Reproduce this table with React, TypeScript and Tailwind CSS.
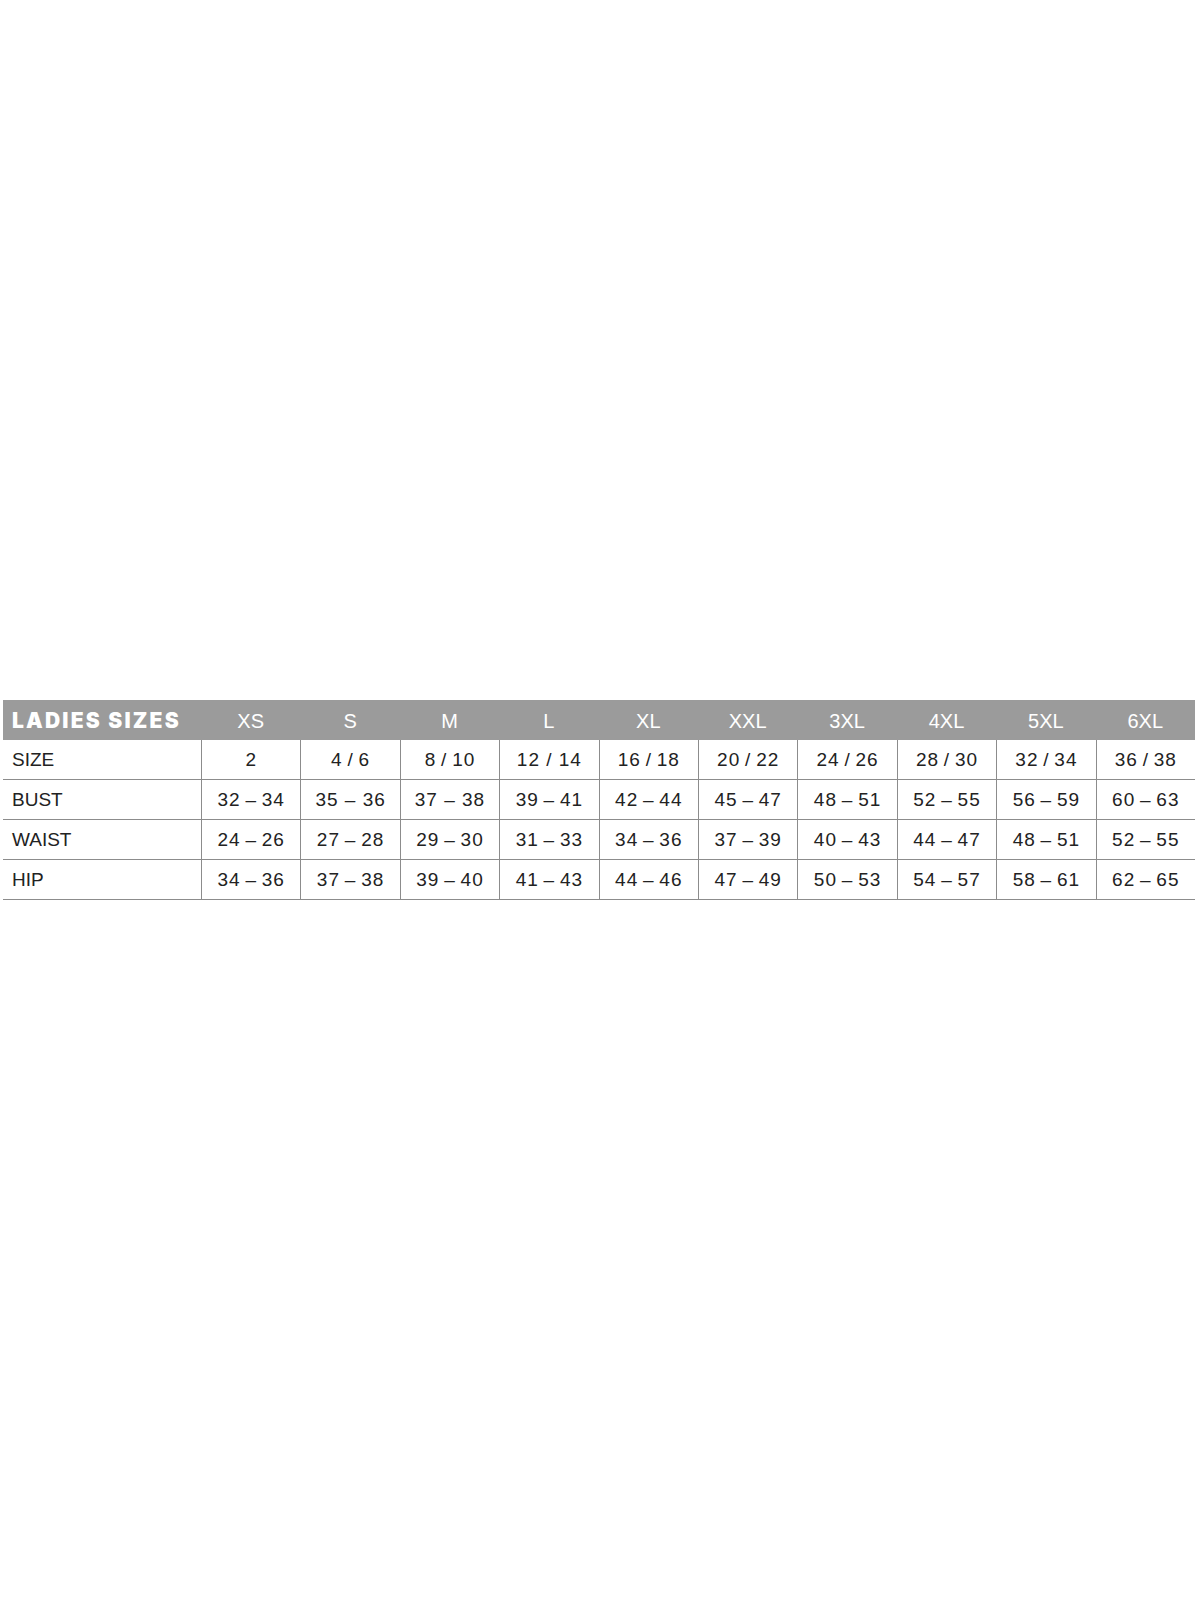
import React from "react";

const sizes = ["XS", "S", "M", "L", "XL", "XXL", "3XL", "4XL", "5XL", "6XL"];
const t = "\u2009–\u2009";
const rows: { label: string; values: string[] }[] = [
  { label: "SIZE", values: ["2", "4\u2009/\u20096", "8\u2009/\u200910", "12 / 14", "16\u2009/\u200918", "20\u2009/\u200922", "24\u2009/\u200926", "28\u2009/\u200930", "32\u2009/\u200934", "36\u2009/\u200938"] },
  { label: "BUST", values: [`32${t}34`, "35 – 36", "37 – 38", `39${t}41`, `42${t}44`, `45${t}47`, `48${t}51`, `52${t}55`, `56${t}59`, `60${t}63`] },
  { label: "WAIST", values: [`24${t}26`, `27${t}28`, `29${t}30`, `31${t}33`, `34${t}36`, `37${t}39`, `40${t}43`, `44${t}47`, `48${t}51`, `52${t}55`] },
  { label: "HIP", values: [`34${t}36`, `37${t}38`, `39${t}40`, `41${t}43`, `44${t}46`, `47${t}49`, `50${t}53`, `54${t}57`, `58${t}61`, `62${t}65`] },
];

export default function App() {
  return (
    <div
      className="min-h-[1600px] w-[1200px] bg-white pt-[700px] pl-[3px]"
      style={{ fontFamily: '"Liberation Sans", Arial, sans-serif' }}
    >
      <div className="w-[1192px]">
        <div className="grid grid-cols-[198px_repeat(10,minmax(0,1fr))] h-[40px] bg-[#9b9b9b] text-white">
          <div
            className="flex items-center pl-[9px] pt-[2px] text-[21px] font-black tracking-[2.2px]"
            style={{ fontFamily: 'Inter, "Liberation Sans", sans-serif' }}
          >
            LADIES SIZES
          </div>
          {sizes.map((s) => (
            <div key={s} className="flex items-center justify-center pt-[1px] text-[20px]">
              {s}
            </div>
          ))}
        </div>
        {rows.map((r) => (
          <div
            key={r.label}
            className="grid grid-cols-[198px_repeat(10,minmax(0,1fr))] h-[40px] border-b-[1.5px] border-[#8c8c8c] text-[#222222]"
          >
            <div className="flex items-center pl-[9px] pt-[2px] text-[19px]">{r.label}</div>
            {r.values.map((v, i) => (
              <div
                key={i}
                className="flex items-center justify-center pt-[2px] border-l-[1.5px] border-[#8c8c8c] text-[19px] tracking-[1px] whitespace-pre"
              >
                {v}
              </div>
            ))}
          </div>
        ))}
      </div>
    </div>
  );
}
